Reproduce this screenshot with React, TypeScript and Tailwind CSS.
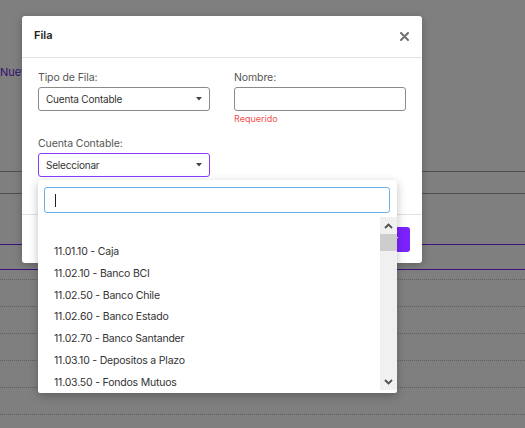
import React from 'react';

const font = { fontFamily: 'Inter, "Noto Sans", sans-serif' };

const cuentas = [
  '11.01.10 - Caja',
  '11.02.10 - Banco BCI',
  '11.02.50 - Banco Chile',
  '11.02.60 - Banco Estado',
  '11.02.70 - Banco Santander',
  '11.03.10 - Depositos a Plazo',
  '11.03.50 - Fondos Mutuos',
];

function Caret() {
  return (
    <svg width="6" height="4" viewBox="0 0 6 4" className="shrink-0">
      <path d="M0 0h6L3 3.5z" fill="#444" />
    </svg>
  );
}

function Chevron({ down = false }: { down?: boolean }) {
  return (
    <svg width="9" height="6" viewBox="0 0 9 6">
      <path
        d={down ? 'M1 1l3.5 3.5L8 1' : 'M1 5l3.5-3.5L8 5'}
        stroke="#505050"
        strokeWidth="1.8"
        fill="none"
      />
    </svg>
  );
}

function Background() {
  return (
    <div className="h-[428px] w-[525px] bg-white overflow-hidden">
      <div className="pt-[64px] text-[11px] leading-[16px] text-[#6a20e0]">Nuevo</div>
      <div className="mt-[91px] h-[23px] border-t border-b border-[#a0a0a0]" />
      <div className="mt-[50px] h-[26px] border-t border-b border-[#7a22ff]" />
      <div className="h-[10px] border-b border-dotted border-[#bcbcbc]" />
      {[0, 1, 2, 3, 4].map((i) => (
        <div key={i} className="h-[27px] border-b border-dotted border-[#bcbcbc]" />
      ))}
    </div>
  );
}

export default function App() {
  return (
    <div className="relative h-[428px] w-[525px] overflow-hidden" style={font}>
      <Background />
      <div className="absolute inset-0 bg-black/50" />

      {/* modal */}
      <div className="absolute left-[22px] top-[16px] w-[400px] rounded-[3px] bg-white shadow-[0_2px_8px_rgba(0,0,0,0.25)]">
        <div className="flex h-[42px] items-center justify-between border-b border-[#e3e3e3] pl-[12px] pr-[13px]">
          <span className="-mt-[3px] text-[11px] font-semibold text-[#222]">Fila</span>
          <svg width="9" height="9" viewBox="0 0 9 9">
            <path d="M1 1l7 7M8 1L1 8" stroke="#707070" strokeWidth="2" strokeLinecap="round" />
          </svg>
        </div>
        <div className="px-[16px] pt-[13px] pb-[37px]">
          <div className="grid grid-cols-2 gap-x-[24px]">
            <div>
              <div className="text-[10.5px] leading-[14px] tracking-[-0.1px] text-[#555]">Tipo de Fila:</div>
              <div className="mt-[2px] flex h-[24px] items-center justify-between rounded-[3px] border border-[#8a8a8a] pl-[7px] pr-[7px]">
                <span className="text-[10px] tracking-[-0.2px] text-[#333]">Cuenta Contable</span>
                <Caret />
              </div>
            </div>
            <div>
              <div className="text-[10.5px] leading-[14px] tracking-[-0.1px] text-[#555]">Nombre:</div>
              <div className="mt-[2px] h-[24px] rounded-[3px] border border-[#8a8a8a]" />
              <div className="mt-[2px] text-[9px] leading-[12px] text-[#f05050]">Requerido</div>
            </div>
          </div>
          <div className="mt-[12px] w-[172px]">
            <div className="text-[10.5px] leading-[14px] tracking-[-0.1px] text-[#555]">Cuenta Contable:</div>
            <div className="mt-[2px] flex h-[24px] items-center justify-between rounded-[3px] border-[1.5px] border-[#8b3dff] pl-[7px] pr-[7px]">
              <span className="text-[10px] tracking-[-0.2px] text-[#333]">Seleccionar</span>
              <Caret />
            </div>
          </div>
        </div>
        <div className="flex h-[49px] items-center justify-end border-t border-[#e3e3e3] pr-[12px]">
          <button className="h-[25px] rounded-[3px] bg-[#7b22ff] px-[12px] text-[10px] font-semibold text-white">
            Guardar
          </button>
        </div>
      </div>

      {/* dropdown */}
      <div className="absolute left-[38px] top-[180px] w-[359px] rounded-[2px] bg-white shadow-[0_3px_10px_rgba(0,0,0,0.25)]">
        <div className="pl-[6px] pr-[7px] pt-[7px]">
          <div className="flex h-[26px] items-center rounded-[3px] border border-[#6aaee8] pl-[10px]">
            <span className="h-[13px] w-px bg-[#222]" />
          </div>
        </div>
        <div className="mt-[4px] mb-[3px] flex h-[173px]">
          <div className="flex-1 overflow-hidden">
            <div className="h-[24px]" />
            {cuentas.map((c) => (
              <div key={c} className="flex h-[21.8px] items-center pl-[16px] text-[10.5px] tracking-[-0.2px] text-[#333]">
                {c}
              </div>
            ))}
          </div>
          <div className="flex w-[17px] flex-col bg-[#f0f0f0]">
            <div className="flex h-[17px] items-center justify-center">
              <Chevron />
            </div>
            <div className="h-[17px] bg-[#cdcdcd]" />
            <div className="flex-1" />
            <div className="flex h-[17px] items-center justify-center">
              <Chevron down />
            </div>
          </div>
        </div>
      </div>
    </div>
  );
}
